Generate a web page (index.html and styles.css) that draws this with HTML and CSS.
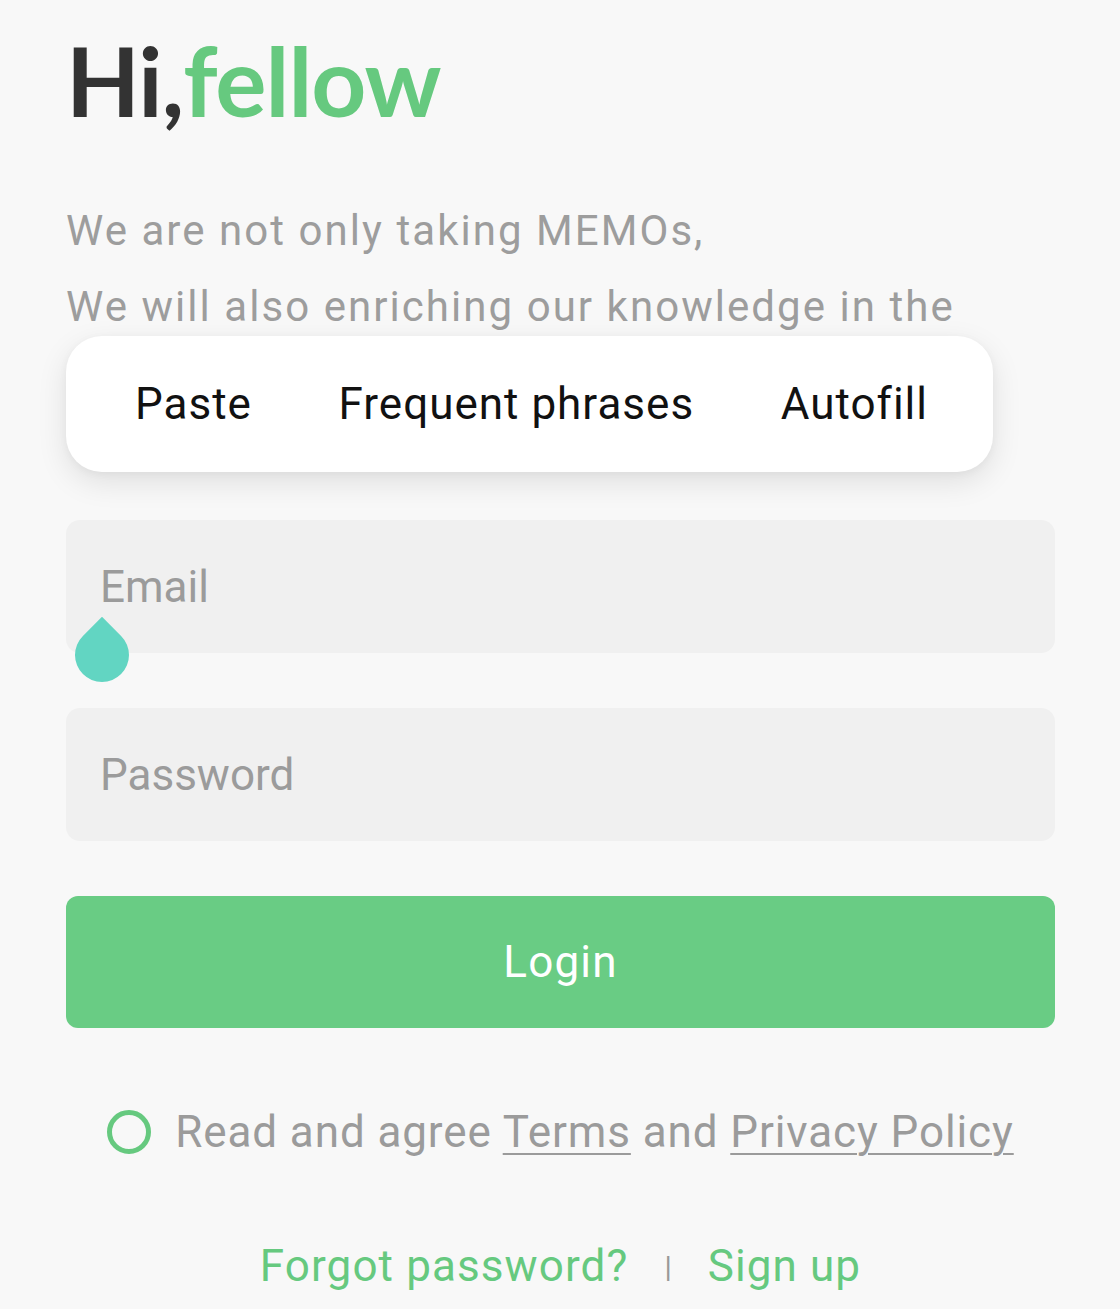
FILE: index.html
```html
<!DOCTYPE html>
<html lang="en">
<head>
<meta charset="utf-8">
<title>Login</title>
<link rel="stylesheet" href="styles.css">
</head>
<body>
<main class="page">
  <h1 class="hello"><span class="hi">Hi,</span><span class="fellow">fellow</span></h1>
  <div class="intro">
    <p class="intro-line">We are not only taking MEMOs,</p>
    <p class="intro-line">We will also enriching our knowledge in the</p>
    <div class="context-menu">
      <span class="menu-item">Paste</span>
      <span class="menu-item">Frequent phrases</span>
      <span class="menu-item">Autofill</span>
    </div>
  </div>
  <form class="form">
    <div class="field">
      <span class="placeholder">Email</span>
      <span class="cursor-handle"></span>
    </div>
    <div class="field">
      <span class="placeholder">Password</span>
    </div>
    <div class="login-btn">Login</div>
  </form>
  <div class="agree">
    <span class="check"></span>
    <span class="agree-text">Read and agree <u>Terms</u> and <u>Privacy Policy</u></span>
  </div>
  <div class="links">
    <span class="link">Forgot password?</span>
    <span class="sep">|</span>
    <span class="link">Sign up</span>
  </div>
</main>
</body>
</html>
```

FILE: styles.css
```css
html, body {
  margin: 0;
  padding: 0;
  background: #f8f8f8;
}

.page {
  width: 989px;
  padding: 0 65px 0 66px;
  font-family: Roboto, "Liberation Sans", sans-serif;
}

.hello {
  margin: 32px 0 0 0;
  height: 96px;
  font-family: Lato, "Liberation Sans", sans-serif;
  font-weight: 700;
  font-size: 96px;
  line-height: 96px;
  letter-spacing: -1px;
}

.hi {
  color: #333333;
}

.fellow {
  color: #66c97f;
}

.intro {
  position: relative;
  margin-top: 65px;
}

.intro-line {
  margin: 0;
  font-size: 42px;
  font-weight: 400;
  line-height: 76px;
  letter-spacing: 2.05px;
  color: #9d9d9d;
  white-space: nowrap;
}

.context-menu {
  position: absolute;
  top: 143px;
  left: 0;
  width: 927px;
  height: 136px;
  box-sizing: border-box;
  padding: 0 65px 0 69px;
  display: flex;
  align-items: center;
  justify-content: space-between;
  background: #ffffff;
  border-radius: 36px;
  box-shadow: 0 10px 30px rgba(0, 0, 0, 0.10), 0 2px 8px rgba(0, 0, 0, 0.04);
}

.menu-item {
  font-size: 44px;
  color: #111111;
  line-height: 1;
  letter-spacing: 1px;
}

.form {
  margin-top: 175px;
  display: flex;
  flex-direction: column;
  gap: 55px;
}

.field {
  position: relative;
  height: 133px;
  border-radius: 14px;
  background: #f0f0f0;
  display: flex;
  align-items: center;
  padding-left: 34px;
}

.placeholder {
  font-size: 44px;
  color: #9b9b9b;
}

.cursor-handle {
  position: absolute;
  left: 9px;
  top: 108px;
  width: 54px;
  height: 54px;
  background: #62d5c2;
  border-radius: 0 50% 50% 50%;
  transform: rotate(45deg);
}

.login-btn {
  height: 132px;
  border-radius: 12px;
  background: #69cc84;
  color: #ffffff;
  font-size: 44px;
  letter-spacing: 1.2px;
  display: flex;
  align-items: center;
  justify-content: center;
}

.agree {
  margin-top: 80px;
  display: flex;
  align-items: center;
  justify-content: center;
  gap: 24px;
  height: 48px;
}

.check {
  width: 34px;
  height: 34px;
  border: 5px solid #66c97f;
  border-radius: 50%;
}

.agree-text {
  font-size: 44px;
  color: #9b9b9b;
  letter-spacing: 0.9px;
}

.agree-text u {
  text-decoration-thickness: 2px;
  text-underline-offset: 6px;
}

.links {
  margin-top: 84px;
  display: flex;
  align-items: center;
  justify-content: center;
  gap: 36px;
}

.link {
  font-size: 44px;
  color: #66c97f;
  letter-spacing: 1.1px;
}

.sep {
  font-size: 30px;
  color: #999999;
}
```
